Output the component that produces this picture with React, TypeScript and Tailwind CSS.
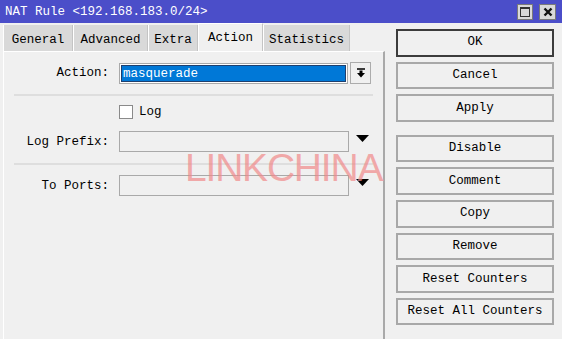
import React from "react";

const mono = { fontFamily: '"Liberation Mono", "DejaVu Sans Mono", monospace' };

const tabs = [
  { name: "General", w: "w-[70px]" },
  { name: "Advanced", w: "w-[75px]" },
  { name: "Extra", w: "w-[50px]" },
  { name: "Action", w: "w-[65px]", active: true },
  { name: "Statistics", w: "w-[87px]" },
];

const DownTriangle = () => (
  <svg width="13" height="8" viewBox="0 0 13 8">
    <path d="M0 0 L13 0 L6.5 7 Z" fill="#000" />
  </svg>
);

const Field = ({ children }: { children?: React.ReactNode }) => (
  <div className="w-[230px] h-[21px] border border-[#a9a9a9] bg-[#f0f0f0]">{children}</div>
);

const Btn = ({ label, primary }: { label: string; primary?: boolean }) => (
  <button
    type="button"
    className={`w-[158px] h-[27.6px] flex items-center justify-center text-[12.5px] text-black bg-[#f0f0f0] ${
      primary ? "border-2 border-[#3c3c3c]" : "border-2 border-[#a8a8a8]"
    }`}
  >
    {label}
  </button>
);

export default function App() {
  return (
    <div className="w-[562px] h-[339px] bg-[#f0f0f0] relative overflow-hidden text-black" style={mono}>
      {/* title bar */}
      <div className="h-[23px] bg-[#4b4ec9] flex items-center justify-between pl-[5px] pr-[6px]">
        <span className="text-white text-[12.5px] leading-none pt-[2px]">NAT Rule &lt;192.168.183.0/24&gt;</span>
        <div className="flex gap-[6px] items-center">
          <div className="w-[16px] h-[16px] bg-[#d9d9d9] border border-[#7a7a7a] flex items-center justify-center">
            <div className="w-[10px] h-[10px] border border-[#333] border-t-2" />
          </div>
          <div className="w-[17px] h-[16px] bg-[#d9d9d9] border border-[#7a7a7a] flex items-center justify-center">
            <svg width="10" height="10" viewBox="0 0 10 10">
              <path d="M1.5 1.5 L8.5 8.5 M8.5 1.5 L1.5 8.5" stroke="#111" strokeWidth="2.4" />
            </svg>
          </div>
        </div>
      </div>

      <div className="flex">
        {/* left side: tabs + panel */}
        <div className="w-[385px] pl-[3px] pt-[1px]">
          <div className="flex items-end h-[27px]">
            {tabs.map((t) => (
              <div
                key={t.name}
                className={`${t.w} flex items-center justify-center text-[12.5px] border-l border-white border-r border-r-[#c4c4c4] ${
                  t.active ? "h-[28px] bg-[#f0f0f0] border-t border-t-white pt-[1px]" : "h-[26px] bg-[#d9d9d9] pt-[5px]"
                }`}
              >
                {t.name}
              </div>
            ))}
          </div>
          <div className="h-[300px] border-t border-white border-l border-r-2 border-r-[#a9a9a9] pt-[10px]">
            {/* action */}
            <div className="flex items-center h-[22px]">
              <div className="w-[105px] text-right text-[12.5px] pt-[1px]">Action:</div>
              <div className="ml-[10px] w-[229px] h-[21px] border border-[#a9a9a9] bg-white p-[1px]">
                <div className="h-full bg-[#0078d7] border border-[#1e3f6e] text-white text-[12.5px] leading-[16px] pl-[1px]">
                  masquerade
                </div>
              </div>
              <div className="ml-[2px] w-[21px] h-[22px] border border-[#acacac] flex items-center justify-center">
                <svg width="10" height="10" viewBox="0 0 10 10">
                  <path d="M1 1 H9" stroke="#000" strokeWidth="1.5" />
                  <path d="M3.5 2.5 H6.5 V5 H9 L5 9.5 L1 5 H3.5 Z" fill="#000" />
                </svg>
              </div>
            </div>
            <div className="mx-[10px] mt-[10px] border-t-2 border-[#dedede]" />

            {/* log */}
            <div className="flex items-center mt-[8px] h-[15px]">
              <div className="ml-[115px] w-[14px] h-[14px] bg-white border border-[#8a8a8a]" />
              <span className="ml-[6px] text-[12.5px] pt-[2px]">Log</span>
            </div>

            {/* log prefix */}
            <div className="flex items-center mt-[12px] h-[21px]">
              <div className="w-[105px] text-right text-[12.5px] pt-[1px]">Log Prefix:</div>
              <div className="ml-[10px]">
                <Field />
              </div>
              <div className="ml-[7px] mt-[-5px]">
                <DownTriangle />
              </div>
            </div>
            <div className="mx-[10px] mt-[11px] border-t-2 border-[#dedede]" />

            {/* to ports */}
            <div className="flex items-center mt-[10px] h-[21px]">
              <div className="w-[105px] text-right text-[12.5px] pt-[1px]">To Ports:</div>
              <div className="ml-[10px]">
                <Field />
              </div>
              <div className="ml-[7px] mt-[-5px]">
                <DownTriangle />
              </div>
            </div>
          </div>
        </div>

        {/* right side: buttons */}
        <div className="ml-[11px] pt-[6px] flex flex-col gap-[5px]">
          <Btn label="OK" primary />
          <Btn label="Cancel" />
          <Btn label="Apply" />
          <div className="h-[3px]" />
          <Btn label="Disable" />
          <Btn label="Comment" />
          <Btn label="Copy" />
          <Btn label="Remove" />
          <Btn label="Reset Counters" />
          <Btn label="Reset All Counters" />
        </div>
      </div>

      {/* watermark */}
      <div
        className="absolute left-[185px] top-[148px] text-[39px] tracking-[-1.2px] text-[#f08a8a] opacity-70 pointer-events-none leading-none"
        style={{ fontFamily: '"Liberation Sans", Arial, sans-serif' }}
      >
        LINKCHINA
      </div>
    </div>
  );
}
